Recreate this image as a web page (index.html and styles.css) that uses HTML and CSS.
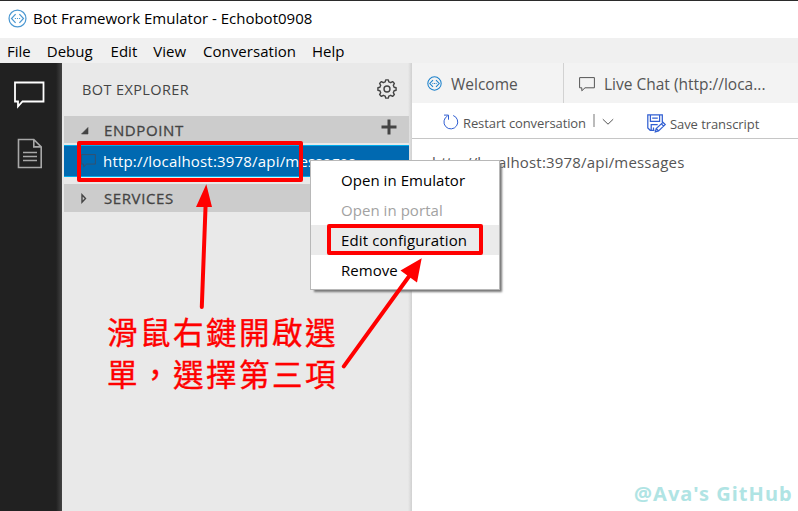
FILE: index.html
```html
<!DOCTYPE html>
<html lang="zh-Hant">
<head>
<meta charset="utf-8">
<title>Bot Framework Emulator</title>
<link rel="stylesheet" href="styles.css">
</head>
<body>
<svg class="defs" width="0" height="0">
  <symbol id="bot" viewBox="0 0 20 20">
    <circle cx="10" cy="10" r="8.9"/>
    <path d="M8 5.4 3.7 10 8 14.6M12 5.4 16.3 10 12 14.6"/>
    <path class="dots" d="M7.2 9.4h1.2v1.2H7.2zM9.4 9.4h1.2v1.2H9.4zM11.6 9.4h1.2v1.2h-1.2z"/>
  </symbol>
  <symbol id="chat" viewBox="0 0 16 15"><path d="M.6.6h14.8v10.2H6L2.8 13.8v-3H.6z"/></symbol>
</svg>
<div class="app">
  <header class="titlebar"><svg class="bot-icon"><use href="#bot"/></svg><span>Bot Framework Emulator - Echobot0908</span></header>
  <nav class="menubar">
    <span>File</span><span>Debug</span><span class="m-edit">Edit</span><span>View</span><span class="m-conv">Conversation</span><span>Help</span>
  </nav>
  <div class="body">
    <aside class="activity">
      <svg class="act-chat" viewBox="0 0 32 28"><path d="M2 1.5h28.5v19H9.5L5 25.5v-5H2z"/></svg>
      <svg class="act-doc" viewBox="0 0 26 31"><path d="M1.5 1.5h15.3l7.4 7.4v20.6H1.5zM16.8 1.5v7.4h7.4M6 14.5h14M6 18.5h14M6 22.5h14"/></svg>
    </aside>
    <section class="explorer">
      <div class="explorer-head"><span>BOT EXPLORER</span>
        <svg class="gear" viewBox="0 0 20 20"><path d="M8.2 2.9 8.7.9h2.6l.5 2 1.9.8 1.9-1.1 1.8 1.8-1.1 1.9.8 1.9 2 .5v2.6l-2 .5-.8 1.9 1.1 1.9-1.8 1.8-1.9-1.1-1.9.8-.5 2H8.7l-.5-2-1.9-.8-1.9 1.1-1.8-1.8 1.1-1.9-.8-1.9-2-.5V8.7l2-.5.8-1.9-1.1-1.9 1.8-1.8 1.9 1.1z"/><circle cx="10" cy="10" r="3"/></svg>
      </div>
      <div class="group endpoint"><svg class="tri" viewBox="0 0 9 9"><path class="solid" d="M8 1.5v6.5H1.5z"/></svg><span>ENDPOINT</span>
        <svg class="plus" viewBox="0 0 16 16"><path d="M8 .5v15M.5 8h15"/></svg></div>
      <div class="selected"><svg class="row-chat"><use href="#chat"/></svg><span>http://localhost:3978/api/messages</span></div>
      <div class="group services"><svg class="tri" viewBox="0 0 9 9"><path d="M2 .8 5.5 4.5 2 8.2z"/></svg><span>SERVICES</span></div>
    </section>
    <main class="main">
      <div class="tabs">
        <div class="tab welcome"><svg class="tab-bot"><use href="#bot"/></svg><span>Welcome</span></div>
        <div class="tab live"><svg class="tab-chat"><use href="#chat"/></svg><span>Live Chat (http://loca...</span></div>
      </div>
      <div class="toolbar">
        <svg class="restart" viewBox="0 0 16 16"><path d="M10.2 1.5a6.9 6.9 0 1 1-5.6.4M1 1.1h4.5v4.6"/></svg><span class="t-restart">Restart conversation</span>
        <i class="divider"></i>
        <svg class="chev" viewBox="0 0 12 8"><path d="m.8 1.2 5.2 5 5.2-5"/></svg>
        <svg class="save" viewBox="0 0 19 19"><path d="M7.5 16.3H3.2L.8 13.9V.8h14.5v7.4M3.4.8v6.6h9.2V.8M5.2 4h5.6M4.2 16v-5.3h6.5M6.5 13.4v2.7M8.3 17.8l.9-3.3 6.8-6.1 2.2 2.2-6.7 6.3zM14.4 9.9l2.2 2.2M9.2 14.5l2.3 2.4"/></svg><span class="t-save">Save transcript</span>
      </div>
      <div class="content">http://localhost:3978/api/messages</div>
    </main>
  </div>
  <div class="context">
    <div>Open in Emulator</div><div class="c-portal">Open in portal</div><div class="c-edit">Edit configuration</div><div>Remove</div>
  </div>
  <div class="box box-url"></div>
  <div class="box box-edit"></div>
  <svg class="arrows" viewBox="0 0 798 511">
    <path d="M201.8 307 205.6 205M343.8 366.3 410 275"/>
    <path class="head" d="M206.3 184.2 212 207H196zM421.7 258.2 400.5 270.5 417 282.5z"/>
  </svg>
  <p class="note"><span>滑鼠右鍵開啟選</span><br><span>單，選擇第三項</span></p>
  <div class="watermark">@Ava's GitHub</div>
</div>
</body>
</html>
```
FILE: styles.css
```css
* { box-sizing: border-box; }
body { margin: 0; }
.defs { position: absolute; }
svg { fill: none; stroke: currentColor; flex: none; overflow: visible; }
.app {
  position: relative; width: 798px; height: 511px; overflow: hidden;
  display: flex; flex-direction: column; background: #fff; color: #000;
  font: 15px/20px "Open Sans", "Noto Sans", sans-serif; white-space: nowrap;
}
.titlebar { height: 38px; border-top: 1px solid #2b2b2b; display: flex; align-items: center; padding: 0 0 2px 8px; gap: 6px; }
.titlebar span { padding-bottom: 1px; }
.bot-icon { width: 19px; height: 19px; color: #4b98d2; stroke-width: 1.3; }
.dots { fill: currentColor; stroke: none; }
.menubar { height: 25px; background: #f0f0f0; display: flex; align-items: center; padding: 1px 0 0 7px; gap: 16px; }
.m-edit { margin-left: 2px; }
.m-conv { letter-spacing: .04px; margin-left: 1px; }
.body { flex: 1; display: flex; min-height: 0; }
.activity { width: 62px; background: linear-gradient(to right, #212121 56px, #434343 62px); display: flex; flex-direction: column; padding: 18px 0 0 13px; }
.act-chat { width: 32px; height: 28px; color: #fff; stroke-width: 1.8; }
.act-doc { width: 26px; height: 31px; margin: 29px 0 0 4px; color: #a8a8a8; stroke-width: 1.6; }
.explorer { width: 350px; background: linear-gradient(to right, #e9e9e9 346px, #d0d0d0 350px); color: #444; padding-left: 2px; }
.explorer-head { height: 53px; display: flex; align-items: center; justify-content: space-between; padding: 0 15px 2px 18px; font-size: 14.5px; letter-spacing: .4px; }
.explorer-head span { padding-top: 3px; }
.gear { width: 20px; height: 20px; stroke-width: 1.4; stroke-linejoin: round; }
.group { width: 345px; height: 27px; background: #ccc; display: flex; align-items: center; padding: 1px 12px 0 16px; letter-spacing: .6px; -webkit-text-stroke: .3px #444; }
.group .tri { width: 9px; height: 9px; margin-right: 15px; stroke-width: 1.4; }
.solid { fill: currentColor; stroke-width: .6; }
.plus { width: 16px; height: 16px; margin: -7px 0 0 auto; stroke-width: 3; }
.selected { width: 345px; height: 32px; margin: 2px 0 7px; background: #0069b1; border: solid #00acea; border-width: 1px 0; color: #fff; display: flex; align-items: center; padding-left: 17px; gap: 7px; letter-spacing: .19px; }
.row-chat { width: 15px; height: 14px; color: #38506a; }
.services { height: 28px; padding-top: 0; }
.main { flex: 1; min-width: 0; color: #555; }
.tabs { height: 40px; background: #f3f3f3; display: flex; font-size: 15.5px; }
.tab { display: flex; align-items: center; padding: 2px 0 0 15px; }
.welcome { width: 152px; border-right: 1px solid #d2d2d2; gap: 9px; }
.tab-bot { width: 15px; height: 15px; margin-top: -2px; color: #1b80cb; stroke-width: 1.4; }
.live { gap: 9px; }
.tab-chat { width: 16px; height: 15px; }
.toolbar { height: 36px; border-bottom: 1px solid #c6c6c6; display: flex; align-items: center; padding: 3px 0 0 31px; font-size: 13px; }
.restart { width: 16px; height: 16px; color: #315fd2; margin: 0 4px 0 0; }
.t-restart { letter-spacing: -.1px; padding-top: 1px; }
.divider { width: 2px; height: 13px; background: #bbb; margin: -4px 7px 0 7px; }
.chev { width: 12px; height: 8px; margin: 0 33px 0 0; }
.save { width: 19px; height: 19px; color: #315fd2; stroke-width: 1.25; margin: 2px 4px 0 0; }
.t-save { padding-top: 3px; letter-spacing: -.07px; }
.content { padding: 13px 0 0 20px; letter-spacing: .19px; }
.context { position: absolute; left: 310px; top: 160px; width: 190px; height: 130px; background: #fff; border: 1px solid #b8b8b8; box-shadow: 3px 3px 2px -1px #777; padding: 4px 0; }
.context div { height: 30px; line-height: 31px; padding-left: 30px; letter-spacing: .05px; }
.context .c-portal { color: #a2a2a2; }
.context .c-edit { background: #ebebeb; letter-spacing: .12px; }
.box { position: absolute; border: 4px solid #f00; border-radius: 2px; }
.box-url { left: 77px; top: 141px; width: 226px; height: 41px; }
.box-edit { left: 327px; top: 224px; width: 156px; height: 31px; }
.arrows { position: absolute; inset: 0; width: 798px; height: 511px; color: #f00; stroke-width: 4; stroke-linecap: round; }
.head { fill: #f00; stroke: none; }
.note { position: absolute; left: 107px; top: 310px; margin: 0; font: 400 30.5px/42px "Noto Sans CJK TC", sans-serif; letter-spacing: 2.5px; color: #f00; -webkit-text-stroke: .4px #f00; }
.watermark { position: absolute; left: 634px; top: 480px; font: bold 20px/28px "Noto Sans", sans-serif; letter-spacing: 1.05px; color: #b0e4e4; }
```
